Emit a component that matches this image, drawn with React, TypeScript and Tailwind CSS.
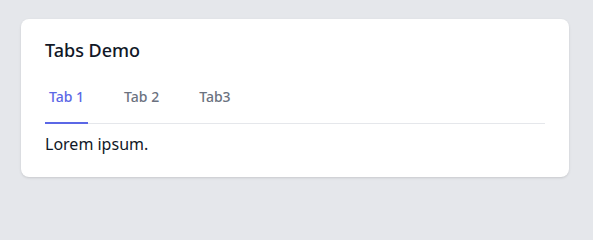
import { useState } from "react";

const tabs = [
  { id: "tab1", label: "Tab 1", content: "Lorem ipsum." },
  { id: "tab2", label: "Tab 2", content: "Dolor sit amet." },
  { id: "tab3", label: "Tab3", content: "Consectetur adipiscing." },
];

export default function App() {
  const [active, setActive] = useState("tab1");
  const current = tabs.find((t) => t.id === active);

  return (
    <div
      className="min-h-screen bg-[#e5e7eb] pt-[19px] pr-6 pl-[21px]"
      style={{ fontFamily: '"Noto Sans", sans-serif' }}
    >
      <div className="rounded-lg bg-white px-6 pt-[17px] pb-[21px] shadow-sm">
        <h2 className="text-lg leading-7 font-medium text-[#111827]">Tabs Demo</h2>

        {/* tab bar */}
        <div className="mt-[7px] flex gap-8 border-b border-[#e5e7eb]">
          {tabs.map((tab) => (
            <button
              key={tab.id}
              onClick={() => setActive(tab.id)}
              className={
                tab.id === active
                  ? "-mb-px border-b-2 border-[#5b67e6] px-1 pt-4 pb-[15px] text-sm font-medium text-[#5b67e6]"
                  : "-mb-px border-b-2 border-transparent px-1 pt-4 pb-[15px] text-sm font-medium text-[#6b7280]"
              }
            >
              {tab.label}
            </button>
          ))}
        </div>

        <div className="pt-2 text-base leading-6 text-[#111827]">{current?.content}</div>
      </div>
    </div>
  );
}
